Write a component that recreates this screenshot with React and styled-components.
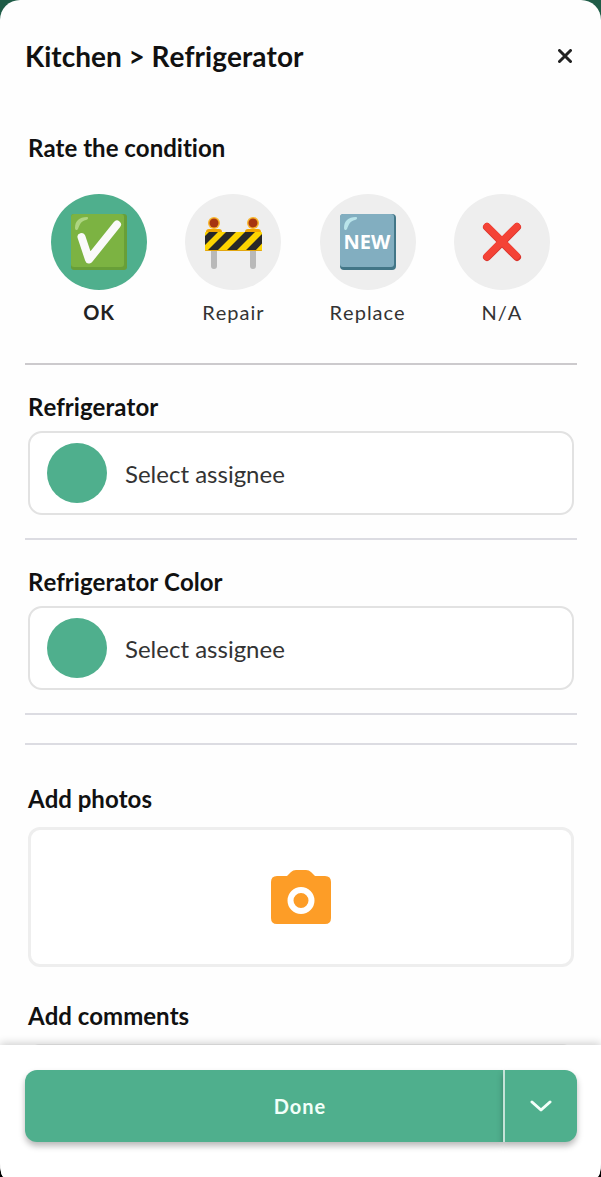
import React, { useState } from "react";
import styled, { createGlobalStyle } from "styled-components";

const conditions = [
  { id: "ok", label: "OK", Icon: CheckEmoji },
  { id: "repair", label: "Repair", Icon: BarrierEmoji },
  { id: "replace", label: "Replace", Icon: NewEmoji },
  { id: "na", label: "N/A", Icon: CrossEmoji },
];

function CheckEmoji() {
  return (
    <Emoji viewBox="0 0 60 60" aria-hidden="true">
      <rect x="2" y="2" width="56" height="56" rx="3" fill="#689f38" />
      <rect x="2" y="2" width="53" height="53" rx="3" fill="#7cb342" />
      <path d="M6 16C6 9 10 5 18 5C20 5 19 8 17 8C12 9 11 12 9 17C8 19 6 18 6 16Z" fill="#aed581" />
      <path
        d="M12.500 25L20 47.500L48 12.500"
        fill="none"
        stroke="#fafafa"
        strokeWidth="8"
        strokeLinecap="round"
        strokeLinejoin="round"
      />
    </Emoji>
  );
}

function BarrierEmoji() {
  return (
    <Emoji viewBox="1 0 60 60" aria-hidden="true">
      <path d="M9 37v17a3 3 0 0 0 6 0V37zM48 37v17a3 3 0 0 0 6 0V37z" fill="#b9b9b9" />
      <path d="M4 20q0-3 3-3h10q3 0 3 3v3H4zM43 20q0-3 3-3h10q3 0 3 3v3H43z" fill="#f2a600" />
      <circle cx="12" cy="11" r="6" fill="#f9b52b" />
      <circle cx="51" cy="11" r="6" fill="#f9b52b" />
      <circle cx="12" cy="11" r="4.500" fill="#a73410" />
      <circle cx="51" cy="11" r="4.500" fill="#a73410" />
      <clipPath id="board">
        <rect x="3" y="20" width="57" height="19" rx="1" />
      </clipPath>
      <g clipPath="url(#board)">
        <rect x="3" y="20" width="57" height="19" fill="#fdd400" />
        <path
          d="M7 20h9L-1 37v-9zM24 20h10L15 39H5zM43 20h10L34 39H24zM62 20h9L53 39H43z"
          fill="#282828"
        />
        <path d="M3 39h57v-1H3z" fill="#e2a610" />
      </g>
    </Emoji>
  );
}

function NewEmoji() {
  return (
    <Emoji viewBox="0 0 60 60" aria-hidden="true">
      <rect x="2" y="2" width="56" height="56" rx="4" fill="#427687" />
      <rect x="2" y="2" width="54" height="53" rx="3" fill="#82aec0" />
      <path d="M6 16C6 9 10 5 18 5C20 5 19 8 17 8C12 9 11 12 9 17C8 19 6 18 6 16Z" fill="#b9e4ea" />
      <EmojiText x="29" y="37" textAnchor="middle">
        NEW
      </EmojiText>
    </Emoji>
  );
}

function CrossEmoji() {
  return (
    <Emoji viewBox="0 0 60 60" aria-hidden="true">
      <path
        d="M15 15L45 45M45 15L15 45"
        stroke="#d9342d"
        strokeWidth="8"
        strokeLinecap="round"
      />
      <path
        d="M15 14.500L44.500 44M45 14.500L15 44.500"
        stroke="#f44336"
        strokeWidth="7"
        strokeLinecap="round"
      />
    </Emoji>
  );
}

function Assignee({ id, title }) {
  return (
    <Section>
      <Heading id={id}>{title}</Heading>
      <AssigneeButton type="button" aria-describedby={id}>
        <Avatar />
        Select assignee
      </AssigneeButton>
    </Section>
  );
}

function App() {
  const [condition, setCondition] = useState("ok");

  return (
    <>
      <GlobalStyle />
      <Sheet>
        <Header>
          <Title>Kitchen &gt; Refrigerator</Title>
          <CloseButton type="button" aria-label="Close">
            <svg width="14" height="14" viewBox="0 0 14 14">
              <path d="M1.500 1.500L12.500 12.500M12.500 1.500L1.500 12.500" stroke="#222" strokeWidth="3" strokeLinecap="round" />
            </svg>
          </CloseButton>
        </Header>

        <Body>
          <Heading id="rate">Rate the condition</Heading>
          <Ratings role="radiogroup" aria-labelledby="rate">
            {conditions.map(({ id, label, Icon }) => (
              <Rating key={id} $active={condition === id}>
                <HiddenRadio
                  type="radio"
                  name="condition"
                  checked={condition === id}
                  onChange={() => setCondition(id)}
                />
                <Bubble $active={condition === id}>
                  <Icon />
                </Bubble>
                {label}
              </Rating>
            ))}
          </Ratings>

          <Divider $dark />
          <Assignee id="fridge" title="Refrigerator" />
          <Divider />
          <Assignee id="fridge-color" title="Refrigerator Color" />
          <Divider />
          <Spacer />
          <Divider />

          <Photos>
            <Heading id="photos" $gap={12}>
              Add photos
            </Heading>
            <PhotoButton type="button" aria-labelledby="photos">
              <svg width="60" height="54" viewBox="0 0 60 54">
                <path
                  d="M6 6h10l4-4q2-2 5-2h10q3 0 5 2l4 4h10q6 0 6 6v36q0 6-6 6H6q-6 0-6-6V12q0-6 6-6z"
                  fill="#fd9d27"
                />
                <circle cx="30" cy="30.500" r="10.500" fill="none" stroke="#fff" strokeWidth="6" />
              </svg>
            </PhotoButton>
          </Photos>

          <Heading as="label" htmlFor="comments" $gap={12}>
            Add comments
          </Heading>
          <Comments id="comments" />
        </Body>

        <Footer>
          <DoneButton type="button">Done</DoneButton>
          <MoreButton type="button" aria-label="More options">
            <svg width="22" height="12" viewBox="0 0 22 12">
              <path
                d="M2 2L11 10L20 2"
                fill="none"
                stroke="#f2fff9"
                strokeWidth="3"
                strokeLinecap="round"
                strokeLinejoin="round"
              />
            </svg>
          </MoreButton>
        </Footer>
      </Sheet>
    </>
  );
}

export default App;

const GlobalStyle = createGlobalStyle`
  * {
    box-sizing: border-box;
  }

  body {
    margin: 0;
    background: linear-gradient(#1f5c47 50%, #000 50%);
    font-family: Lato, sans-serif;
    font-kerning: none;
    font-variant-ligatures: none;
    color: #111;
  }

  button {
    font-family: inherit;
    cursor: pointer;
  }
`;

const Sheet = styled.main`
  display: flex;
  flex-direction: column;
  height: 100vh;
  background-color: #fefefe;
  border-radius: 20px 20px 4px 4px / 20px 20px 14px 14px;
  overflow: hidden;
`;

const Header = styled.header`
  display: flex;
  align-items: center;
  justify-content: space-between;
  padding: 36px 24px 0 25px;
`;

const Title = styled.h1`
  margin: 0;
  font-size: 28px;
  line-height: 40px;
  font-weight: 700;
`;

const CloseButton = styled.button`
  display: flex;
  padding: 5px;
  border: 0;
  background: none;
`;

const Body = styled.div`
  flex: 1;
  min-height: 0;
  padding: 56px 24px 0 25px;
  overflow-y: auto;
  scrollbar-width: none;
`;

const Heading = styled.h2`
  display: block;
  margin: 0 0 ${({ $gap }) => $gap || 8}px;
  padding-left: 3px;
  font-size: 24px;
  line-height: 32px;
  font-weight: 700;
`;

const Ratings = styled.div`
  display: grid;
  grid-template-columns: repeat(4, 1fr);
  padding: 22px 8px 37px 7px;
`;

const Rating = styled.label`
  display: flex;
  flex-direction: column;
  align-items: center;
  gap: 8px;
  font-size: 20px;
  line-height: 28px;
  letter-spacing: 1px;
  font-weight: ${({ $active }) => ($active ? 700 : 400)};
  color: ${({ $active }) => ($active ? "#222" : "#333")};
  cursor: pointer;
`;

const HiddenRadio = styled.input`
  position: absolute;
  opacity: 0;
`;

const Bubble = styled.span`
  display: flex;
  align-items: center;
  justify-content: center;
  width: 96px;
  height: 96px;
  border-radius: 50%;
  background-color: ${({ $active }) => ($active ? "#4faf8d" : "#eee")};
`;

const Emoji = styled.svg`
  width: 60px;
  height: 60px;
`;

const EmojiText = styled.text`
  font-family: "Open Sans", sans-serif;
  font-size: 20px;
  font-weight: 700;
  letter-spacing: 0;
  fill: #fff;
`;

const Divider = styled.hr`
  height: 2px;
  margin: 0;
  border: 0;
  background-color: ${({ $dark }) => ($dark ? "#cccacd" : "#dcdce2")};
`;

const Spacer = styled.div`
  height: 28px;
`;

const Section = styled.section`
  padding: 26px 3px 23px;

  ${Heading} {
    padding-left: 0;
  }
`;

const AssigneeButton = styled.button`
  display: flex;
  align-items: center;
  gap: 18px;
  width: 100%;
  height: 84px;
  padding: 0 17px;
  border: 2px solid #e2e2e2;
  border-radius: 14px;
  background-color: #fff;
  color: #333;
  font-size: 24px;
`;

const Avatar = styled.span`
  width: 60px;
  height: 60px;
  border-radius: 50%;
  background-color: #4faf8d;
`;

const Photos = styled.section`
  padding: 38px 0 33px;
`;

const PhotoButton = styled.button`
  display: flex;
  align-items: center;
  justify-content: center;
  width: calc(100% - 6px);
  height: 140px;
  margin: 0 3px;
  border: 3px solid #eee;
  border-radius: 12px;
  background-color: #fff;
`;

const Comments = styled.textarea`
  display: block;
  width: calc(100% - 6px);
  height: 140px;
  margin: 0 3px 24px;
  border: 3px solid #eee;
  border-radius: 12px;
  font: inherit;
  resize: none;
`;

const Footer = styled.footer`
  display: flex;
  z-index: 1;
  padding: 25px 24px 35px 25px;
  background-color: #fff;
  box-shadow: 0 -2px 8px rgba(0, 0, 0, 0.18);
`;

const FooterButton = styled.button`
  display: flex;
  align-items: center;
  justify-content: center;
  height: 72px;
  padding: 0;
  border: 0;
  background-color: #4faf8d;
  color: #f2fff9;
  box-shadow: 0 4px 6px rgba(0, 0, 0, 0.28);
`;

const DoneButton = styled(FooterButton)`
  flex: 1;
  padding-left: 72px;
  border-radius: 12px 0 0 12px;
  font-size: 20px;
  font-weight: 700;
  letter-spacing: 1px;
`;

const MoreButton = styled(FooterButton)`
  width: 74px;
  border-left: 2px solid #c5e3d8;
  border-radius: 0 12px 12px 0;
`;
